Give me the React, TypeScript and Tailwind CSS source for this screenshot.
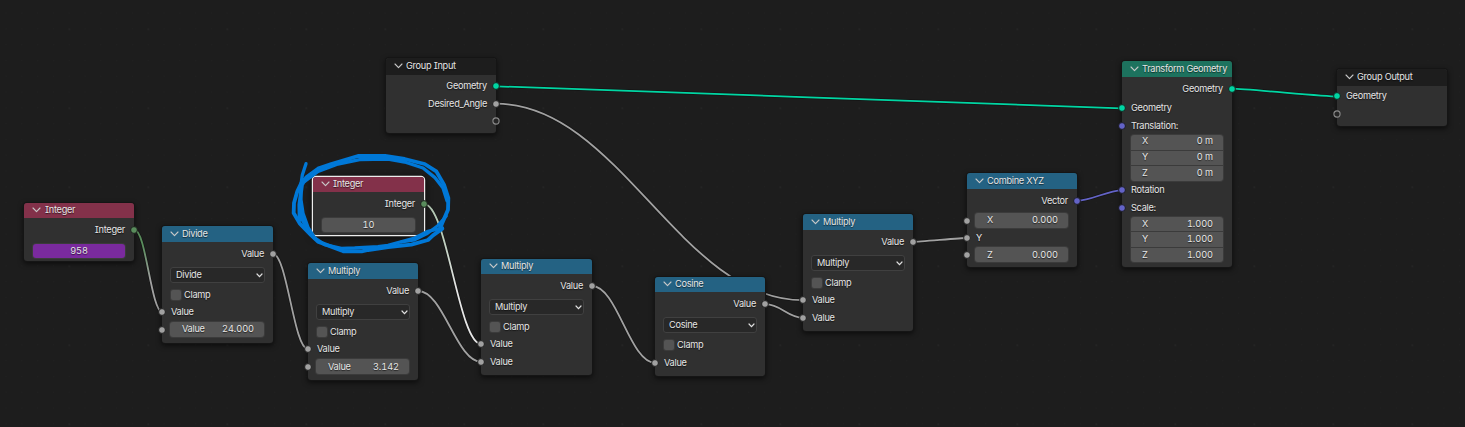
import React from "react";

type Pt = [number, number];

const GRAY = "#a1a1a1";
const GREEN = "#598c5c";
const GEO = "#00d6a3";
const VEC = "#6363c7";

const wires: { from: Pt; to: Pt; a: string; b: string }[] = [
  { from: [134.7, 230], to: [162.3, 312], a: GREEN, b: GRAY },
  { from: [273, 253.8], to: [307.8, 349], a: GRAY, b: GRAY },
  { from: [418.2, 291], to: [481.5, 362], a: GRAY, b: GRAY },
  { from: [424, 204], to: [481.5, 344.3], a: "#b4c8b4", b: "#e6e6e6" },
  { from: [592, 286], to: [655, 362.8], a: GRAY, b: GRAY },
  { from: [496.3, 103.7], to: [802.8, 300.2], a: GRAY, b: GRAY },
  { from: [765.7, 304.2], to: [802.8, 317.8], a: GRAY, b: GRAY },
  { from: [913.3, 241.8], to: [966.5, 238], a: GRAY, b: GRAY },
  { from: [1077, 200.7], to: [1122, 190.3], a: VEC, b: VEC },
  { from: [496.3, 86.3], to: [1121.8, 108.3], a: GEO, b: GEO },
  { from: [1232.4, 88.7], to: [1336.7, 96.5], a: GEO, b: GEO },
];

function wirePath([x1, y1]: Pt, [x2, y2]: Pt) {
  const dx = x2 - x1;
  const slope = Math.abs(y2 - y1) / dx;
  const h = 0.4 * dx * Math.min(1, slope * 3.5);
  return `M${x1} ${y1}C${x1 + h} ${y1} ${x2 - h} ${y2} ${x2} ${y2}`;
}

function Wires() {
  return (
    <svg className="absolute inset-0" width="1465" height="427" fill="none">
      <defs>
        <pattern id="minor" x="5.5" y="12.5" width="15.8" height="15.8" patternUnits="userSpaceOnUse">
          <rect width="1" height="1" fill="#212121" />
        </pattern>
        <pattern id="major" x="68.5" y="28.5" width="79" height="79" patternUnits="userSpaceOnUse">
          <rect width="1.5" height="1.5" fill="#282828" />
        </pattern>
        {wires.map((w, i) => (
          <linearGradient key={i} id={`w${i}`} gradientUnits="userSpaceOnUse" x1={w.from[0]} y1={w.from[1]} x2={w.to[0]} y2={w.to[1]}>
            <stop offset="0.2" stopColor={w.a} />
            <stop offset="0.6" stopColor={w.b} />
          </linearGradient>
        ))}
      </defs>
      <rect width="1465" height="427" fill="url(#minor)" />
      <rect width="1465" height="427" fill="url(#major)" />
      {wires.map((w, i) => (
        <g key={i}>
          <path d={wirePath(w.from, w.to)} stroke="#141414" strokeWidth="3.2" />
          <path d={wirePath(w.from, w.to)} stroke={`url(#w${i})`} strokeWidth="1.8" />
        </g>
      ))}
    </svg>
  );
}

function Socket({ side, color }: { side: "left" | "right"; color: string }) {
  const place = side === "left" ? "-left-[5px]" : "-right-[5px]";
  return (
    <svg className={`absolute top-1/2 -translate-y-1/2 ${place}`} width="10" height="10" viewBox="0 0 10 10">
      {color === "none" ? (
        <circle cx="5" cy="5" r="3.1" fill="#262626" stroke="#8a8a8a" strokeWidth="1.1" />
      ) : (
        <circle cx="5" cy="5" r="3.4" fill={color} stroke="#161616" strokeWidth="0.9" />
      )}
    </svg>
  );
}

function Chevron() {
  return (
    <svg width="9" height="6" viewBox="0 0 9 6" fill="none" stroke="#c8c8c8" strokeWidth="1.1" strokeLinecap="round" strokeLinejoin="round">
      <path d="M1 1l3.5 3.7L8 1" />
    </svg>
  );
}

function Node({ place, head, title, gap = "gap-[3px]", selected, children }: {
  place: string; head: string; title: string; gap?: string; selected?: boolean; children: React.ReactNode;
}) {
  const ring = selected
    ? "shadow-[0_0_0_1.2px_#ededed,0_2px_6px_2px_rgba(0,0,0,0.5)]"
    : "shadow-[0_0_0_1px_#151515,0_2px_5px_1px_rgba(0,0,0,0.55)]";
  return (
    <section className={`absolute flex flex-col rounded-[3px] bg-[#303030] ${ring} ${place}`}>
      <header className={`flex shrink-0 items-center rounded-t-[3px] pb-px pl-2 text-[#e6e6e6] ${gap} ${head}`}>
        <Chevron />
        <span className="leading-none">{title}</span>
      </header>
      {children}
    </section>
  );
}

function Out({ label, color = GRAY, className = "mt-[2px] h-5" }: { label?: string; color?: string; className?: string }) {
  return (
    <div className={`relative flex shrink-0 items-center justify-end pr-[9px] ${className}`}>
      {label}
      <Socket side="right" color={color} />
    </div>
  );
}

function In({ label, color = GRAY, className = "h-[18px]" }: { label?: string; color?: string; className?: string }) {
  return (
    <div className={`relative flex shrink-0 items-center pl-[9px] ${className}`}>
      {label}
      <Socket side="left" color={color} />
    </div>
  );
}

const numeric = "tabular-nums tracking-[-0.05px]";

function Field({ label, value, className = "", pad = "" }: { label: string; value: string; className?: string; pad?: string }) {
  return (
    <div className={`relative flex h-[15px] shrink-0 pr-[9px] pl-2 ${className}`}>
      <div className={`flex grow items-center justify-between rounded-[3px] bg-[#545454] pr-[10px] pl-[12px] shadow-[0_0_0_1px_#3b3b3b] ${pad}`}>
        <span>{label}</span>
        <span className={numeric}>{value}</span>
      </div>
      <Socket side="left" color={GRAY} />
    </div>
  );
}

function Triple({ values, height, pad = "pb-px" }: { values: string[]; height: string; pad?: string }) {
  return (
    <div className={`mx-[9px] flex shrink-0 flex-col gap-px overflow-hidden rounded-[3px] bg-[#3b3b3b] shadow-[0_0_0_1px_#3b3b3b] ${height}`}>
      {values.map((v, i) => (
        <div key={i} className={`flex grow items-center justify-between bg-[#545454] pr-[10px] pl-[11px] ${pad}`}>
          <span>{"XYZ"[i]}</span>
          <span className={numeric}>{v}</span>
        </div>
      ))}
    </div>
  );
}

function MathControls({ op }: { op: string }) {
  return (
    <>
      <div className="mx-2 mt-[3px] flex h-4 shrink-0 items-center justify-between rounded-[3px] border border-[#404040] bg-[#282828] pr-px pl-[5px]">
        <span>{op}</span>
        <svg width="7" height="5" viewBox="0 0 7 5" fill="none" stroke="#e0e0e0" strokeWidth="1.2" strokeLinecap="round">
          <path d="M1 1l2.5 2.6L6 1" />
        </svg>
      </div>
      <div className="mt-[6px] ml-[9px] flex h-3 shrink-0 items-center gap-[3px]">
        <span className="size-[10px] rounded-[2px] bg-[#545454] shadow-[0_0_0_1px_#3b3b3b]" />
        <span>Clamp</span>
      </div>
    </>
  );
}

const RED = "h-[15px] bg-[#83314a]";
const BLUE = "h-4 bg-[#246283]";
const BLUE_SHORT = "h-[15px] bg-[#246283]";
const DARK = "h-[17px] bg-[#1d1d1d]";

function Scribble() {
  return (
    <svg className="absolute inset-0" width="1465" height="427" fill="none" stroke="#0078d7" strokeLinecap="round" strokeLinejoin="round">
      <g transform="translate(280 140) scale(.33333)" strokeWidth="11.5">
        <path strokeWidth="10" d="M78 71L67 105L62 140L63 180L69 220L84 262L104 294L134 314L184 325L224 324L294 320L324 316L404 294L444 274L487 264" />
        <path d="M69 119L52 154L42 189L41 219L59 250L94 286L114 305L184 331L190 334L245 334L264 330L324 321L394 314L444 300L459 286L487 266" />
        <path d="M59 239L58 194L66 134L79 112L114 86L154 72L234 48L315 48L374 57L434 72L469 94L492 134L505 174L504 209L489 244L479 268" />
        <path strokeWidth="10" d="M74 124L114 94L174 72L239 59L324 57L374 66L429 84L464 112L489 144L501 182" />
        <path d="M61 184L68 240L90 280" />
        <path strokeWidth="9" d="M364 306L404 300L440 282L474 256L499 228" />
      </g>
    </svg>
  );
}

export default function App() {
  return (
    <main className="relative h-[427px] w-[1465px] overflow-hidden bg-[#1d1d1d] font-['Inter',sans-serif] text-[9.2px] leading-none tracking-[-0.28px] whitespace-nowrap text-[#e6e6e6] [font-feature-settings:'cv08'] [text-shadow:0_1px_1px_rgba(0,0,0,0.6)]">
      <Wires />

      <Node place="left-[24px] top-[203px] h-[58px] w-[110px]" head={RED} title="Integer" gap="gap-[4px]">
        <Out label="Integer" color={GREEN} />
        <div className={`mx-[9px] mt-[4px] flex h-[14px] items-center justify-center rounded-[3px] bg-[#7a2a9e] shadow-[0_0_0_1px_#3b3b3b] ${numeric}`}>958</div>
      </Node>

      <Node place="left-[162px] top-[226px] h-[117px] w-[111px]" head={BLUE} title="Divide">
        <Out label="Value" />
        <MathControls op="Divide" />
        <In label="Value" className="mt-[2px] h-[18px]" />
        <Field label="Value" value="24.000" className="mt-px" pad="pb-px" />
      </Node>

      <Node place="left-[308px] top-[263px] h-[117px] w-[110px]" head={BLUE} title="Multiply">
        <Out label="Value" />
        <MathControls op="Multiply" />
        <In label="Value" className="mt-[2px] h-[18px]" />
        <Field label="Value" value="3.142" className="mt-px" />
      </Node>

      <Node place="left-[313px] top-[177px] h-[58px] w-[111px]" head={RED} title="Integer" selected>
        <Out label="Integer" color={GREEN} />
        <div className={`mx-[9px] mt-[4px] flex h-[14px] items-center justify-center rounded-[3px] bg-[#545454] shadow-[0_0_0_1px_#3b3b3b] ${numeric}`}>10</div>
      </Node>

      <Node place="left-[386px] top-[58px] h-[75px] w-[110px]" head={DARK} title="Group Input">
        <Out label="Geometry" color={GEO} className="mt-[2px] h-[18px]" />
        <Out label="Desired_Angle" className="h-[18px]" />
        <Out color="none" className="h-4" />
      </Node>

      <Node place="left-[481px] top-[259px] h-[116px] w-[111px]" head={BLUE_SHORT} title="Multiply">
        <Out label="Value" />
        <MathControls op="Multiply" />
        <In label="Value" className="mt-[2px] h-[18px]" />
        <In label="Value" />
      </Node>

      <Node place="left-[655px] top-[277px] h-[99px] w-[110px]" head={BLUE_SHORT} title="Cosine">
        <Out label="Value" />
        <MathControls op="Cosine" />
        <In label="Value" className="mt-[3px] h-[18px]" />
      </Node>

      <Node place="left-[803px] top-[214px] h-[117px] w-[110px]" head={BLUE} title="Multiply">
        <Out label="Value" />
        <MathControls op="Multiply" />
        <In label="Value" className="mt-[2px] h-[18px]" />
        <In label="Value" />
      </Node>

      <Node place="left-[967px] top-[173px] h-[94px] w-[110px]" head={BLUE} title="Combine XYZ">
        <Out label="Vector" color={VEC} />
        <Field label="X" value="0.000" className="mt-[2px]" pad="pb-px" />
        <In label="Y" className="mt-px h-[18px]" />
        <Field label="Z" value="0.000" />
      </Node>

      <Node place="left-[1122px] top-[61px] h-[206px] w-[110px]" head="h-4 bg-[#1d725e]" title="Transform Geometry">
        <Out label="Geometry" color={GEO} />
        <In label="Geometry" color={GEO} />
        <In label="Translation:" color={VEC} />
        <Triple values={["0 m", "0 m", "0 m"]} height="h-[46px]" pad="pb-[3px]" />
        <In label="Rotation" color={VEC} />
        <In label="Scale:" color={VEC} />
        <Triple values={["1.000", "1.000", "1.000"]} height="h-[45px]" />
      </Node>

      <Node place="left-[1337px] top-[69px] h-[57px] w-[110px]" head={DARK} title="Group Output">
        <In label="Geometry" color={GEO} className="mt-px h-[18px]" />
        <In color="none" className="h-[18px]" />
      </Node>

      <Scribble />
    </main>
  );
}
